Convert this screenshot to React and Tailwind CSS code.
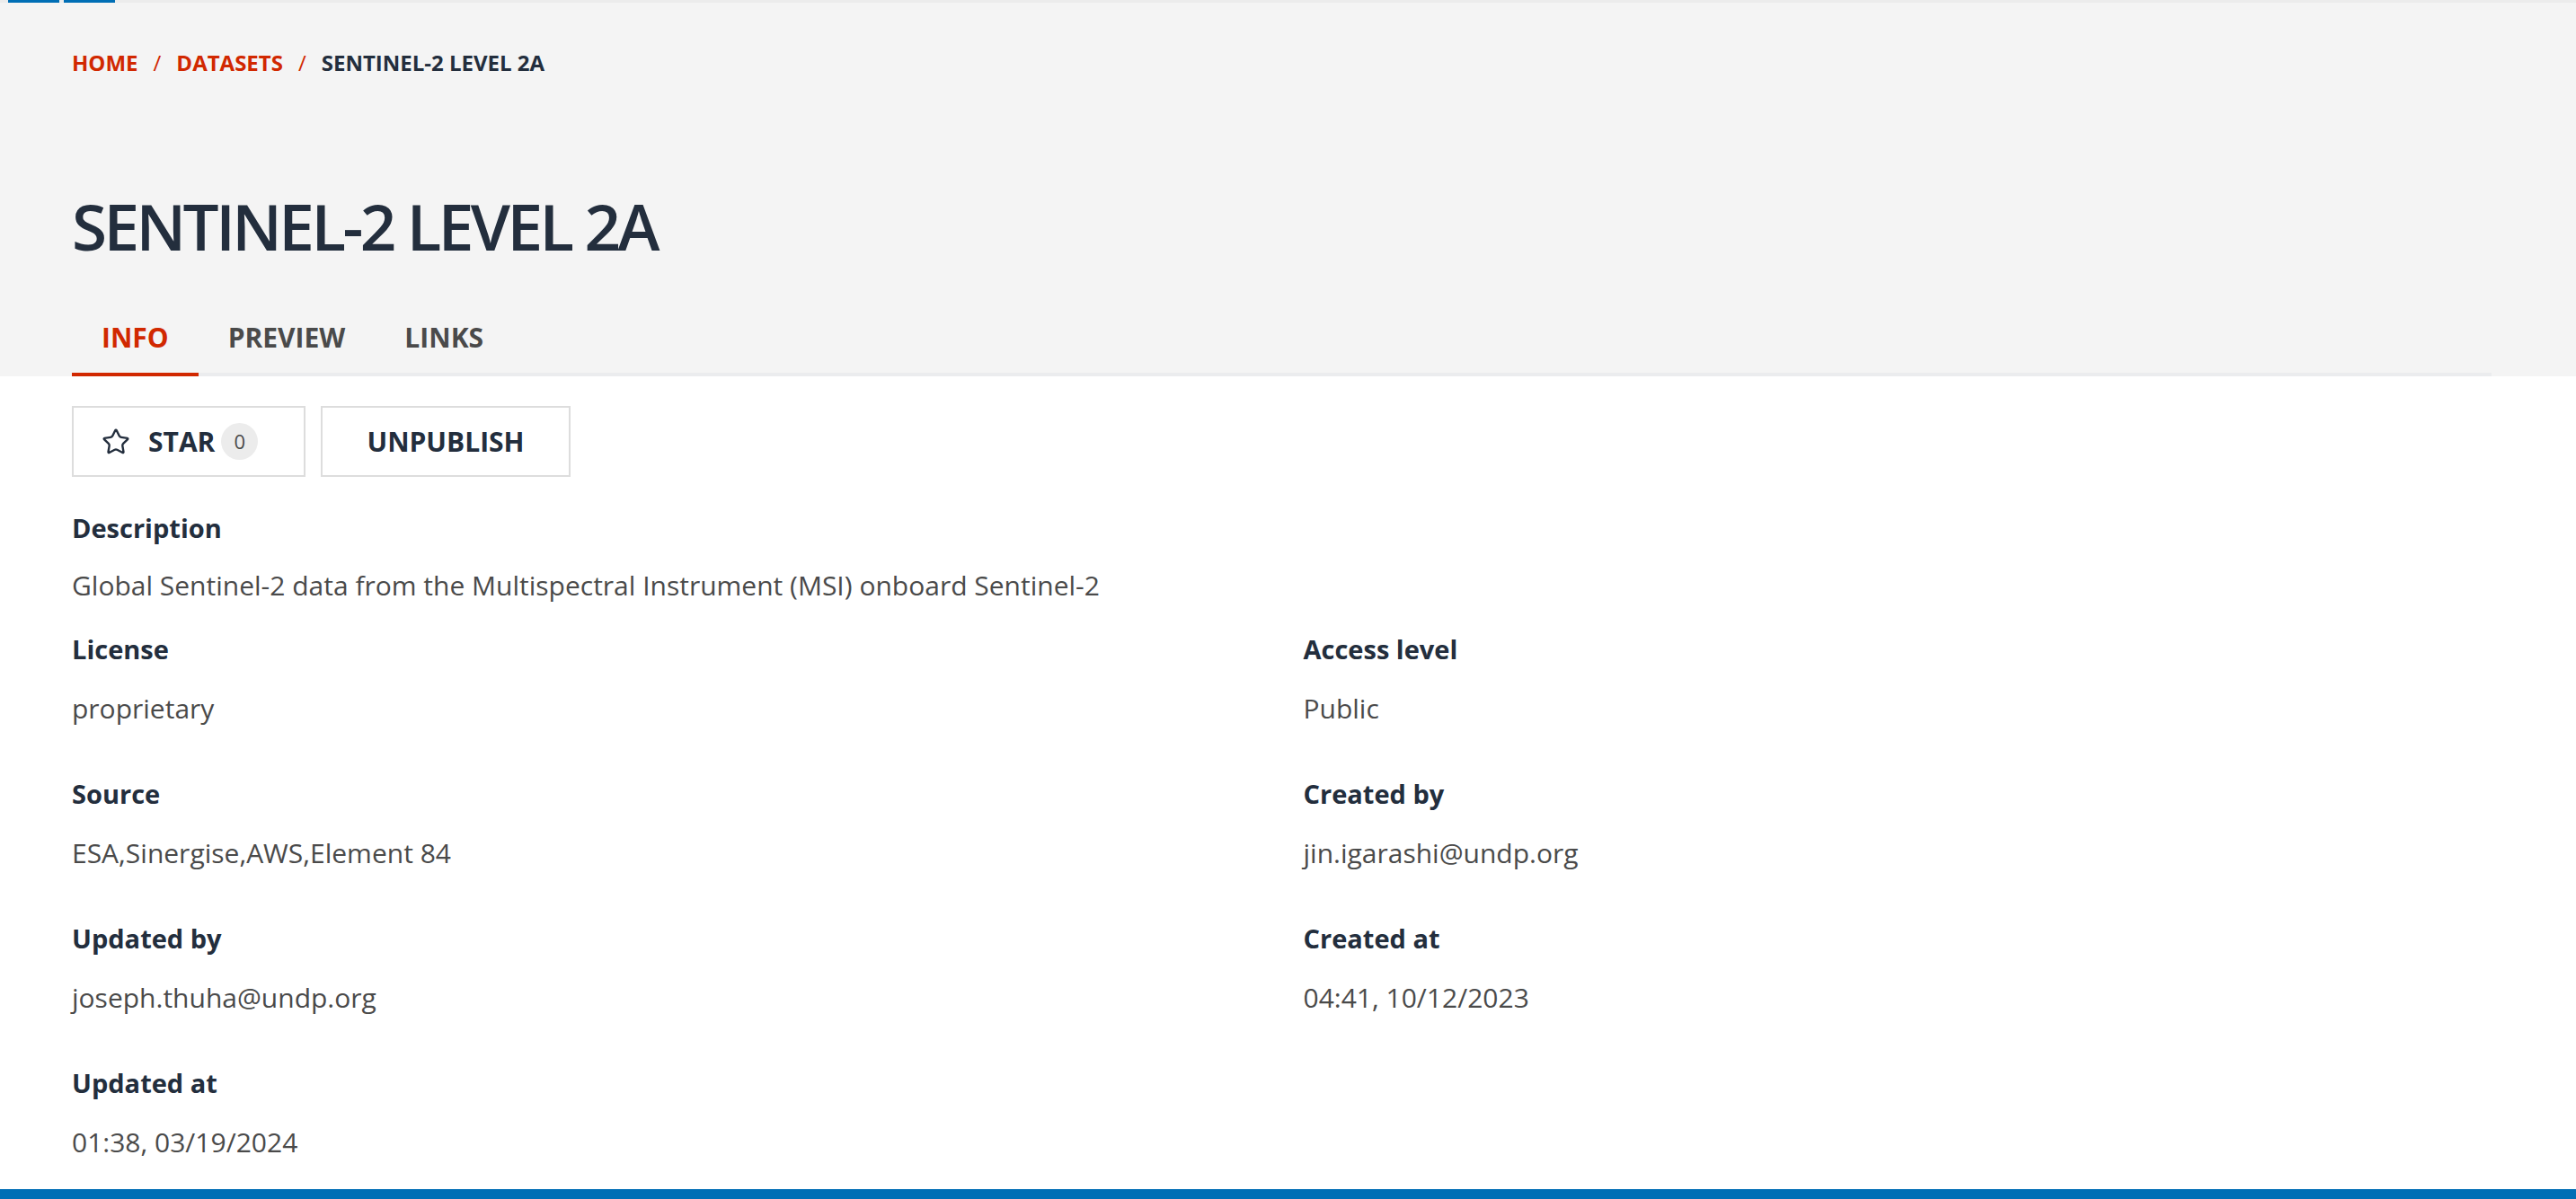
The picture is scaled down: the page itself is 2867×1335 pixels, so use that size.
import { Star } from "lucide-react";

const crumbs = [
  { label: "HOME", link: true },
  { label: "DATASETS", link: true },
  { label: "SENTINEL-2 LEVEL 2A", link: false },
];

const tabs = ["INFO", "PREVIEW", "LINKS"];

const fields = [
  { label: "License", value: "proprietary" },
  { label: "Access level", value: "Public" },
  { label: "Source", value: "ESA,Sinergise,AWS,Element 84" },
  { label: "Created by", value: "jin.igarashi@undp.org" },
  { label: "Updated by", value: "joseph.thuha@undp.org" },
  { label: "Created at", value: "04:41, 10/12/2023" },
  { label: "Updated at", value: "01:38, 03/19/2024" },
];

const Field = ({ label, value }) => (
  <div className="flex flex-col gap-[31px]">
    <span className="text-[29px] leading-[35px] font-bold text-[#232e3d]">
      {label}
    </span>
    <span className="text-[30px] leading-[35px] text-[#4a4a4a]">{value}</span>
  </div>
);

export default function App() {
  return (
    <div className="h-screen flex flex-col bg-white font-['Open_Sans','Liberation_Sans',sans-serif] overflow-hidden">
      <div className="h-[3px] bg-[#ececec] flex shrink-0">
        <div className="ml-[9px] w-[57px] bg-[#006eb5]" />
        <div className="ml-[5px] w-[57px] bg-[#006eb5]" />
      </div>

      <header className="bg-[#f4f4f4] pl-[80px] pr-[94px] shrink-0">
        <nav className="pt-[52px] flex items-center gap-[17px] text-[24px] leading-[30px] font-bold">
          {crumbs.map((c, i) => (
            <div key={c.label} className="flex items-center gap-[17px]">
              {i > 0 && <span className="text-[#d12800] font-normal">/</span>}
              <span className={c.link ? "text-[#d12800]" : "text-[#232e3d]"}>
                {c.label}
              </span>
            </div>
          ))}
        </nav>

        <h1 className="mt-[122px] text-[71px] leading-[90px] font-semibold tracking-[-0.05em] text-[#232e3d]">
          SENTINEL-2 LEVEL 2A
        </h1>

        <div className="mt-[49px] flex border-b-4 border-[#ebecee]">
          {tabs.map((t, i) => (
            <button
              key={t}
              className={`px-[33px] pt-[12px] pb-[22px] -mb-[4px] border-b-4 text-[30px] leading-[35px] font-bold ${
                i === 0
                  ? "border-[#d12800] text-[#d12800]"
                  : "border-transparent text-[#4a4a4a]"
              }`}
            >
              {t}
            </button>
          ))}
        </div>
      </header>

      <main className="pl-[80px] pr-[94px]">
        <div className="mt-[33px] flex gap-[17px]">
          <button className="w-[260px] h-[79px] border-2 border-[#dddddd] flex items-center pl-[31px] text-[#232e3d]">
            <Star className="w-[32px] h-[32px]" strokeWidth={1.8} />
            <span className="ml-[20px] text-[30px] font-bold">STAR</span>
            <span className="ml-[7px] w-[41px] h-[41px] rounded-full bg-[#ececec] flex items-center justify-center text-[22px] text-[#4a4a4a]">
              0
            </span>
          </button>
          <button className="w-[278px] h-[79px] border-2 border-[#dddddd] flex items-center justify-center text-[30px] font-bold text-[#232e3d]">
            UNPUBLISH
          </button>
        </div>

        <div className="mt-[39px] flex flex-col gap-[29px]">
          <span className="text-[29px] leading-[35px] font-bold text-[#232e3d]">
            Description
          </span>
          <p className="text-[30px] leading-[35px] text-[#4a4a4a]">
            Global Sentinel-2 data from the Multispectral Instrument (MSI)
            onboard Sentinel-2
          </p>
        </div>

        <div className="mt-[36px] grid grid-cols-2 gap-x-[48px] gap-y-[60px]">
          {fields.map((f) => (
            <Field key={f.label} {...f} />
          ))}
        </div>
      </main>

      <footer className="mt-auto h-[11px] bg-[#006eb5] shrink-0" />
    </div>
  );
}
